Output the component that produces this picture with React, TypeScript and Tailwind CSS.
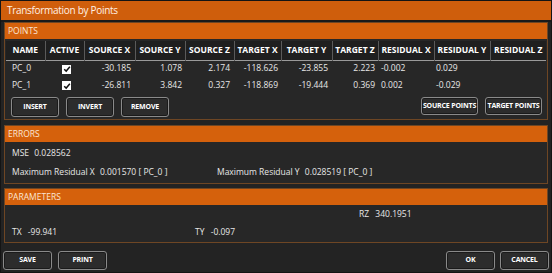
import React from "react";

type Row = {
  name: string;
  active: boolean;
  sx: string;
  sy: string;
  sz: string;
  tx: string;
  ty: string;
  tz: string;
  rx: string;
  ry: string;
  rz: string;
};

const rows: Row[] = [
  { name: "PC_0", active: true, sx: "-30.185", sy: "1.078", sz: "2.174", tx: "-118.626", ty: "-23.855", tz: "2.223", rx: "-0.002", ry: "0.029", rz: "" },
  { name: "PC_1", active: true, sx: "-26.811", sy: "3.842", sz: "0.327", tx: "-118.869", ty: "-19.444", tz: "0.369", rx: "0.002", ry: "-0.029", rz: "" },
];

const columns: { label: string; w: string }[] = [
  { label: "NAME", w: "w-[39px]" },
  { label: "ACTIVE", w: "w-[39px]" },
  { label: "SOURCE X", w: "w-[51px]" },
  { label: "SOURCE Y", w: "w-[50px]" },
  { label: "SOURCE Z", w: "w-[49px]" },
  { label: "TARGET X", w: "w-[47px]" },
  { label: "TARGET Y", w: "w-[51px]" },
  { label: "TARGET Z", w: "w-[46px]" },
  { label: "RESIDUAL X", w: "w-[56px]" },
  { label: "RESIDUAL Y", w: "w-[56px]" },
  { label: "RESIDUAL Z", w: "w-[56px]" },
];

function Btn({ children, className = "" }: { children: React.ReactNode; className?: string }) {
  return (
    <button
      type="button"
      className={`flex items-center justify-center rounded-[3px] border border-[#8a8a8a] bg-[#2c2c2c] text-[7px] font-bold tracking-tight text-white shadow-[inset_0_0_0_1px_#1a1a1a] ${className}`}
    >
      {children}
    </button>
  );
}

function Group({ title, children, className = "" }: { title: string; children: React.ReactNode; className?: string }) {
  return (
    <section className={`mx-[3px] border border-[#6e4624] bg-[#272727] ${className}`}>
      <div className="flex h-[16px] items-center bg-[#d5610c] pl-[3px] text-[8.5px] text-[#fbe6d4]">{title}</div>
      {children}
    </section>
  );
}

function Check() {
  return (
    <span className="inline-flex h-[9px] w-[9px] items-center justify-center bg-white align-middle">
      <svg viewBox="0 0 10 10" className="h-[8px] w-[8px]">
        <path d="M1.5 5.2 L4 7.6 L8.6 2.2" fill="none" stroke="#111" strokeWidth="1.8" />
      </svg>
    </span>
  );
}

export default function App() {
  return (
    <div
      className="flex h-[273px] w-[552px] flex-col border border-[#141414] bg-[#232323] text-[#e8e8e8]"
      style={{ fontFamily: '"Open Sans", "Noto Sans", sans-serif' }}
    >
      <div className="flex h-[21px] items-center border-b-2 border-[#1a1a1a] bg-[#cf5e0c] pl-[6px] text-[10px] tracking-[-0.3px] text-[#fff1e6]">
        Transformation by Points
      </div>

      <Group title="POINTS">
        <table className="mt-[2px] ml-[1px] table-fixed border-collapse text-[8.5px]">
          <thead>
            <tr className="h-[19px] border-b border-[#9a9a9a] bg-[#1f1f1f]">
              {columns.map((c, i) => (
                <th
                  key={c.label}
                  className={`${c.w} p-0 text-center font-bold text-white ${i < columns.length - 1 ? "border-r border-[#5a5a5a]" : ""}`}
                >
                  {c.label}
                </th>
              ))}
            </tr>
          </thead>
          <tbody>
            {rows.map((r) => (
              <tr key={r.name} className="h-[17px]">
                <td className="pl-[6px]">{r.name}</td>
                <td className="pl-[17px]">{r.active && <Check />}</td>
                <td className="pr-[4px] text-right">{r.sx}</td>
                <td className="pr-[3px] text-right">{r.sy}</td>
                <td className="pr-[4px] text-right">{r.sz}</td>
                <td className="pr-[3px] text-right">{r.tx}</td>
                <td className="pr-[4px] text-right">{r.ty}</td>
                <td className="pr-[3px] text-right">{r.tz}</td>
                <td className="pl-[3px]">{r.rx}</td>
                <td className="pl-[2px]">{r.ry}</td>
                <td className="pl-[2px]">{r.rz}</td>
              </tr>
            ))}
          </tbody>
        </table>
        <div className="mt-[3px] mb-[2px] flex items-center pl-[6px] pr-[5px]">
          <div className="flex gap-[7px]">
            <Btn className="h-[20px] w-[48px]">INSERT</Btn>
            <Btn className="h-[20px] w-[48px]">INVERT</Btn>
            <Btn className="h-[20px] w-[48px]">REMOVE</Btn>
          </div>
          <div className="ml-auto flex gap-[7px] self-start">
            <Btn className="h-[18px] w-[57px]">SOURCE POINTS</Btn>
            <Btn className="h-[18px] w-[57px]">TARGET POINTS</Btn>
          </div>
        </div>
      </Group>

      <Group title="ERRORS" className="mt-[5px]">
        <div className="flex h-[41px] flex-col justify-center gap-[6px] pl-[7px] text-[8.5px]">
          <div>
            MSE <span className="ml-[3px]">0.028562</span>
          </div>
          <div className="flex">
            <span className="w-[205px]">
              Maximum Residual X <span className="ml-[3px]">0.001570 [ PC_0 ]</span>
            </span>
            <span>
              Maximum Residual Y <span className="ml-[3px]">0.028519 [ PC_0 ]</span>
            </span>
          </div>
        </div>
      </Group>

      <Group title="PARAMETERS" className="mt-[4px]">
        <div className="grid h-[37px] grid-cols-[183px_164px_1fr] grid-rows-2 items-center pl-[7px] text-[8.5px]">
          <span />
          <span />
          <span>
            RZ <span className="ml-[4px]">340.1951</span>
          </span>
          <span>
            TX <span className="ml-[4px]">-99.941</span>
          </span>
          <span>
            TY <span className="ml-[4px]">-0.097</span>
          </span>
          <span />
        </div>
      </Group>

      <div className="mt-auto mb-[2px] flex px-[2px]">
        <div className="flex gap-[6px]">
          <Btn className="h-[19px] w-[49px]">SAVE</Btn>
          <Btn className="h-[19px] w-[49px]">PRINT</Btn>
        </div>
        <div className="ml-auto flex gap-[5px]">
          <Btn className="h-[19px] w-[49px]">OK</Btn>
          <Btn className="h-[19px] w-[49px]">CANCEL</Btn>
        </div>
      </div>
    </div>
  );
}
